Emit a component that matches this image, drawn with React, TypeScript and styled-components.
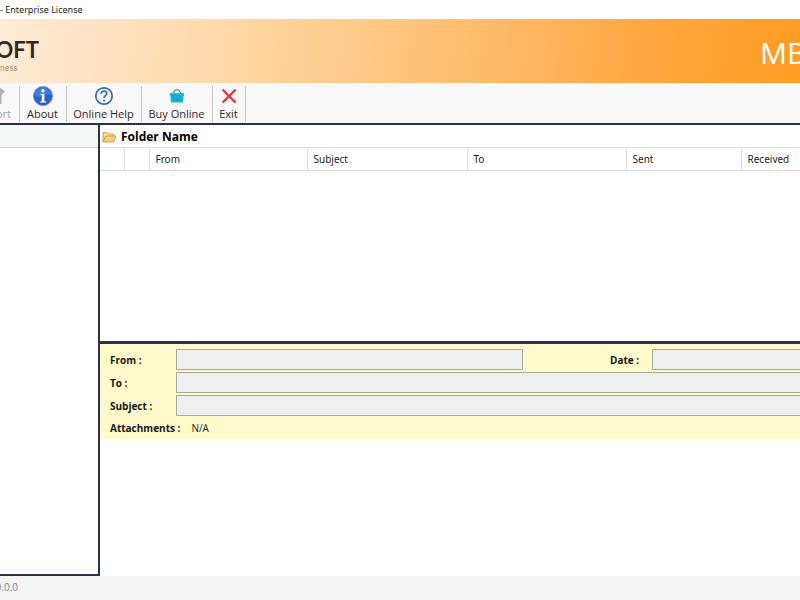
import React from "react";
import styled, { createGlobalStyle } from "styled-components";

const NAVY = "#2c3048";

const GlobalStyle = createGlobalStyle`
  * { box-sizing: border-box; }
  body {
    margin: 0;
    background: #fff;
    color: #1c1c1c;
    font-family: "Open Sans", "Noto Sans", sans-serif;
    font-size: 10px;
    line-height: 14px;
  }
`;

const Window = styled.div`
  display: flex;
  flex-direction: column;
  min-height: 100vh;
  overflow: hidden;
`;

const TitleBar = styled.header`
  height: 19px;
  padding-top: 3px;
  font-family: "Noto Sans", sans-serif;
  font-size: 9px;
  white-space: nowrap;
`;

const Banner = styled.div`
  display: flex;
  justify-content: space-between;
  height: 64px;
  overflow: hidden;
  background: linear-gradient(
    98deg,
    #feecd8 0%,
    #fee3c4 12%,
    #fed5a0 32%,
    #fec57e 50%,
    #feb560 66%,
    #fea53a 84%,
    #fe9c24 100%
  );
`;

const Brand = styled.div`
  display: flex;
  flex-direction: column;
  align-items: flex-end;
  width: 39px;
  padding-top: 18px;
`;

const BrandName = styled.span`
  color: #35261f;
  font-family: Lato, sans-serif;
  font-size: 22px;
  font-weight: 700;
  line-height: 26px;
`;

const Tagline = styled.span`
  align-self: flex-start;
  color: #a08f80;
  font-family: Inter, sans-serif;
  font-size: 8px;
  line-height: 10px;
`;

const ProductName = styled.h1`
  width: 40px;
  margin: 0;
  color: #fff;
  font-size: 30px;
  font-weight: 500;
  line-height: 68px;
  white-space: nowrap;
`;

const Toolbar = styled.nav`
  display: flex;
  height: 42px;
  padding-top: 3px;
  overflow: hidden;
  border-bottom: 2px solid ${NAVY};
  background: #f8f8f8;
`;

const ToolButton = styled.button<{ $width: number; $clipped?: boolean }>`
  display: flex;
  flex-direction: column;
  align-items: ${(p) => (p.$clipped ? "flex-end" : "center")};
  flex: none;
  width: ${(p) => p.$width}px;
  height: 36px;
  padding: 0 ${(p) => (p.$clipped ? "8px" : "1px")} 0 0;
  border: 0;
  border-right: 1px solid #c4c4c4;
  background: none;
  color: #2b2b2b;
  font: 400 11px/16px "Open Sans", sans-serif;
  white-space: nowrap;

  &:disabled {
    color: #a5a5a5;
  }

  svg {
    display: block;
    flex: none;
    width: 20px;
    height: 20px;
  }
`;

const Workspace = styled.main`
  display: flex;
  flex: 1;
`;

const FolderPane = styled.aside`
  flex: none;
  width: 100px;
  border: solid ${NAVY};
  border-width: 0 2px 2px 0;
`;

const FolderPaneHeader = styled.div`
  height: 23px;
  border-bottom: 1px solid #cdd1d4;
  background: #f5f6f6;
`;

const MailPane = styled.div`
  display: flex;
  flex: 1;
  flex-direction: column;
  min-width: 0;
`;

const MailList = styled.section`
  flex: 216 1 0;
  border-bottom: 3px solid ${NAVY};
`;

const FolderTitle = styled.h2`
  display: flex;
  align-items: center;
  gap: 4px;
  height: 22px;
  margin: 0;
  padding: 2px 0 0 2px;
  color: #000;
  font-size: 12px;
  font-weight: 700;

  svg {
    width: 15px;
    height: 14px;
  }
`;

const MailTable = styled.table`
  width: 100%;
  border-collapse: collapse;
  table-layout: fixed;

  th {
    height: 23px;
    padding: 0 0 0 6px;
    border: 1px solid #dcdfe1;
    border-left: 0;
    font: 400 10px/14px "Noto Sans", sans-serif;
    text-align: left;
    white-space: nowrap;
  }
  th:last-child {
    border-right: 0;
  }
`;

const Column = styled.col<{ $width?: number }>`
  width: ${(p) => (p.$width ? `${p.$width}px` : "auto")};
`;

const Preview = styled.section`
  flex: 232 1 0;
`;

const Details = styled.div`
  display: grid;
  grid-template-columns: 66px minmax(0, 347fr) 129px minmax(0, 148fr);
  row-gap: 2px;
  align-items: center;
  padding: 5px 0 1px 10px;
  background: #fefacb;
`;

const Label = styled.label<{ $inset?: boolean }>`
  padding-left: ${(p) => (p.$inset ? "87px" : "0")};
  color: #181610;
  font-weight: 700;
  white-space: nowrap;
`;

const Field = styled.input<{ $wide?: boolean; $toEdge?: boolean }>`
  grid-column: ${(p) => (p.$wide ? "2 / -1" : "auto")};
  width: 100%;
  height: 21px;
  padding: 0 4px;
  border: 1px solid #a9aa9a;
  border-right-width: ${(p) => (p.$toEdge ? "0" : "1px")};
  border-radius: 0;
  background: #efefef;
  font: inherit;
`;

const Attachments = styled.div`
  display: flex;
  grid-column: 1 / -1;
  gap: 11px;
  align-items: center;
  height: 20px;
`;

const AttachmentsLabel = styled.span`
  color: #181610;
  font-weight: 700;
`;

const StatusBar = styled.footer`
  display: flex;
  height: 24px;
  overflow: hidden;
  background: #f4f4f4;
`;

const Version = styled.span`
  display: flex;
  justify-content: flex-end;
  width: 18px;
  padding-top: 4px;
  color: #858585;
`;

const ExportIcon = () => (
  <svg viewBox="0 0 20 20" aria-hidden="true">
    <path d="M8.5 1 14 5.5 10.5 9V18H6.5V9L3 5.5Z" fill="#b1b1b1" />
  </svg>
);

const AboutIcon = () => (
  <svg viewBox="0 0 20 20" aria-hidden="true">
    <circle cx="10" cy="10" r="9.6" fill="#2862cd" stroke="#6d91d8" strokeWidth="0.8" />
    <path d="M1.5 10A8.5 8.5 0 0 1 18.5 9C13 7 9 13 1.5 10Z" fill="#3e7ae0" />
    <circle cx="10" cy="4.8" r="1.7" fill="#fff" />
    <path d="M7.3 7.8H11.4V15L13 15.6V16.4H7.2V15.6L8.8 15V9L7.3 8.6Z" fill="#fff" />
  </svg>
);

const HelpIcon = () => (
  <svg viewBox="0 0 20 20" aria-hidden="true" fill="none" stroke="#356eb8">
    <circle cx="10" cy="10" r="8.2" strokeWidth="1.8" />
    <path d="M7.2 7.8C7.3 4.2 13 4.4 12.8 7.6C12.6 9.5 10.1 9.6 10.1 12" strokeWidth="1.7" />
    <circle cx="10.1" cy="14.5" r="1.1" fill="#356eb8" stroke="none" />
  </svg>
);

const BasketIcon = () => (
  <svg viewBox="0 0 20 20" aria-hidden="true">
    <path d="M5.5 8 8.4 3.8H11.6L14.5 8" fill="none" stroke="#2b9daf" strokeWidth="1.2" />
    <path d="M3 7H17V9.4H16.6L16.2 16.5H3.8L3.4 9.4H3Z" fill="#1dbbd4" />
    <path d="M3.6 9.6H16.4M5 12H15.5M5 14.2H15.2M7 10V15.8M10 10V15.8M13 10V15.8" stroke="#1598af" strokeWidth="0.6" />
  </svg>
);

const ExitIcon = () => (
  <svg viewBox="0 0 20 20" aria-hidden="true">
    <path d="M3.6 3.6 16.6 16.6M16.6 3.6 3.6 16.6" stroke="#d93b41" strokeWidth="2.2" />
  </svg>
);

const FolderIcon = () => (
  <svg viewBox="0 0 15 14" aria-hidden="true" strokeLinejoin="round">
    <path d="M1 11.8V2.6H5.2L6.6 4H11.8V6" fill="#fbe3a0" stroke="#c6963f" strokeWidth="0.9" />
    <path d="M1 12 3.6 6H14L11.6 12Z" fill="#fbcf73" stroke="#c6963f" strokeWidth="0.9" />
  </svg>
);

const tools = [
  { name: "ort", width: 20, icon: <ExportIcon />, clipped: true },
  { name: "About", width: 47, icon: <AboutIcon /> },
  { name: "Online Help", width: 75, icon: <HelpIcon /> },
  { name: "Buy Online", width: 71, icon: <BasketIcon /> },
  { name: "Exit", width: 33, icon: <ExitIcon /> },
];

const columns = [
  { name: "", width: 24 },
  { name: "", width: 25 },
  { name: "From", width: 158 },
  { name: "Subject", width: 160 },
  { name: "To", width: 159 },
  { name: "Sent", width: 115 },
  { name: "Received" },
];

export default function App() {
  return (
    <>
      <GlobalStyle />
      <Window>
        <TitleBar>- Enterprise License</TitleBar>
        <Banner>
          <Brand>
            <BrandName>OFT</BrandName>
            <Tagline>ness</Tagline>
          </Brand>
          <ProductName>MB</ProductName>
        </Banner>
        <Toolbar>
          {tools.map((tool) => (
            <ToolButton
              key={tool.name}
              type="button"
              $width={tool.width}
              $clipped={tool.clipped}
              disabled={tool.clipped}
            >
              {tool.icon}
              {tool.name}
            </ToolButton>
          ))}
        </Toolbar>
        <Workspace>
          <FolderPane>
            <FolderPaneHeader />
          </FolderPane>
          <MailPane>
            <MailList>
              <FolderTitle>
                <FolderIcon />
                Folder Name
              </FolderTitle>
              <MailTable>
                <colgroup>
                  {columns.map((column, i) => (
                    <Column key={i} $width={column.width} />
                  ))}
                </colgroup>
                <thead>
                  <tr>
                    {columns.map((column, i) => (
                      <th key={i} scope="col">{column.name}</th>
                    ))}
                  </tr>
                </thead>
              </MailTable>
            </MailList>
            <Preview>
              <Details>
                <Label htmlFor="from">From :</Label>
                <Field id="from" readOnly />
                <Label htmlFor="date" $inset>Date :</Label>
                <Field id="date" readOnly $toEdge />
                <Label htmlFor="to">To :</Label>
                <Field id="to" readOnly $wide $toEdge />
                <Label htmlFor="subject">Subject :</Label>
                <Field id="subject" readOnly $wide $toEdge />
                <Attachments>
                  <AttachmentsLabel>Attachments :</AttachmentsLabel>
                  <span>N/A</span>
                </Attachments>
              </Details>
            </Preview>
          </MailPane>
        </Workspace>
        <StatusBar>
          <Version>0.0.0</Version>
        </StatusBar>
      </Window>
    </>
  );
}
